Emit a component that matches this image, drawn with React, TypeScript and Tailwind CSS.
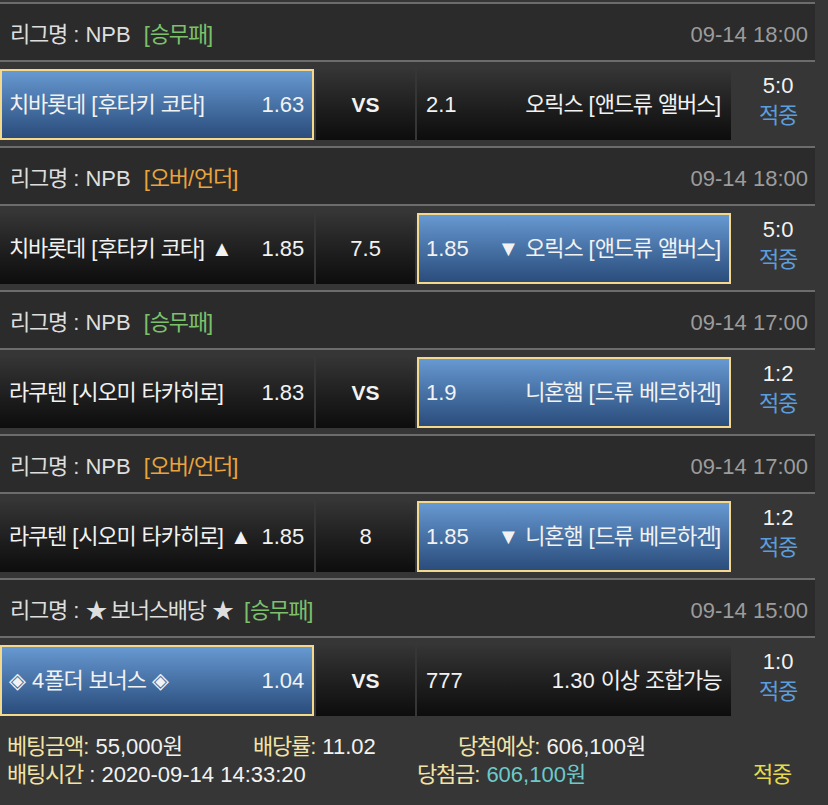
import React from "react";

const SPLIT = /([\uAC00-\uD7A3]+|★)/;

function T({ s }: { s: string }) {
  const parts = s.split(SPLIT);
  return (
    <>
      {parts.map((p, i) =>
        i % 2 === 1 ? (
          <span key={i} className={p === "★" ? "tracking-[-3px]" : "tracking-[-1.2px]"}>
            {p}
          </span>
        ) : (
          <React.Fragment key={i}>{p}</React.Fragment>
        )
      )}
    </>
  );
}

type Group = {
  league: string;
  tag: string;
  tagColor: "green" | "orange";
  date: string;
  home: string;
  homeOdds: string;
  mid: string;
  midBold: boolean;
  away: string;
  awayOdds: string;
  sel: "home" | "away";
  score: string;
};

const groups: Group[] = [
  {
    league: "리그명 : NPB",
    tag: "[승무패]",
    tagColor: "green",
    date: "09-14 18:00",
    home: "치바롯데 [후타키 코타]",
    homeOdds: "1.63",
    mid: "VS",
    midBold: true,
    away: "오릭스 [앤드류 앨버스]",
    awayOdds: "2.1",
    sel: "home",
    score: "5:0",
  },
  {
    league: "리그명 : NPB",
    tag: "[오버/언더]",
    tagColor: "orange",
    date: "09-14 18:00",
    home: "치바롯데 [후타키 코타] ▲",
    homeOdds: "1.85",
    mid: "7.5",
    midBold: false,
    away: "▼ 오릭스 [앤드류 앨버스]",
    awayOdds: "1.85",
    sel: "away",
    score: "5:0",
  },
  {
    league: "리그명 : NPB",
    tag: "[승무패]",
    tagColor: "green",
    date: "09-14 17:00",
    home: "라쿠텐 [시오미 타카히로]",
    homeOdds: "1.83",
    mid: "VS",
    midBold: true,
    away: "니혼햄 [드류 베르하겐]",
    awayOdds: "1.9",
    sel: "away",
    score: "1:2",
  },
  {
    league: "리그명 : NPB",
    tag: "[오버/언더]",
    tagColor: "orange",
    date: "09-14 17:00",
    home: "라쿠텐 [시오미 타카히로] ▲",
    homeOdds: "1.85",
    mid: "8",
    midBold: false,
    away: "▼ 니혼햄 [드류 베르하겐]",
    awayOdds: "1.85",
    sel: "away",
    score: "1:2",
  },
  {
    league: "리그명 : ★ 보너스배당 ★",
    tag: "[승무패]",
    tagColor: "green",
    date: "09-14 15:00",
    home: "◈ 4폴더 보너스 ◈",
    homeOdds: "1.04",
    mid: "VS",
    midBold: true,
    away: "1.30 이상 조합가능",
    awayOdds: "777",
    sel: "home",
    score: "1:0",
  },
];

function cellCls(selected: boolean) {
  return selected
    ? "border-2 border-[#f4d98c] bg-linear-to-b from-[#6799d2] to-[#2a4d7c]"
    : "border-2 border-transparent bg-origin-border bg-linear-to-b from-[#353535] to-[#0d0d0d]";
}

function GroupView({ g }: { g: Group }) {
  return (
    <div>
      <div className="h-[2px] bg-[#6c6c6c]" />
      <div className="h-[56px] bg-[#2b2b2b] flex items-center justify-between pl-[10px] pr-[7px] pt-[5px] leading-[28px]">
        <div className="flex items-center text-[#dedede]">
          <span>
            <T s={g.league} />
          </span>
          <span
            className={
              g.tagColor === "green"
                ? "ml-[13px] text-[#7cc06b]"
                : "ml-[13px] text-[#eaa43c]"
            }
          >
            <T s={g.tag} />
          </span>
        </div>
        <div className="text-[#9c9c9c]">{g.date}</div>
      </div>
      <div className="h-[2px] bg-[#6c6c6c]" />
      <div className="flex gap-[2px] pt-[7px] pb-[6px]">
        <div
          className={`w-[315px] h-[71px] flex items-center justify-between pl-[7px] pr-[8px] text-[#f2f2f2] ${cellCls(
            g.sel === "home"
          )}`}
        >
          <span>
            <T s={g.home} />
          </span>
          <span>{g.homeOdds}</span>
        </div>
        <div
          className={`w-[99px] h-[71px] flex items-center justify-center text-[#f2f2f2] ${cellCls(
            false
          )}`}
        >
          <span className={g.midBold ? "font-bold text-[21px]" : ""}>{g.mid}</span>
        </div>
        <div
          className={`w-[315px] h-[71px] flex items-center justify-between pl-[7px] pr-[8px] text-[#f2f2f2] ${cellCls(
            g.sel === "away"
          )}`}
        >
          <span>{g.awayOdds}</span>
          <span>
            <T s={g.away} />
          </span>
        </div>
        <div className="w-[82px] h-[71px] flex flex-col items-center justify-center pl-[8px] pb-[8px] leading-[30px]">
          <span className="text-[#f2f2f2]">{g.score}</span>
          <span className="text-[#5c9ddb]">
            <T s="적중" />
          </span>
        </div>
      </div>
    </div>
  );
}

export default function App() {
  return (
    <div className="w-[828px] h-[805px] bg-[#363636] pt-[2px] overflow-hidden font-['Liberation_Sans','Noto_Sans_CJK_KR',sans-serif] text-[22px] leading-[28px]">
      <div className="w-[815px]">
        {groups.map((g, i) => (
          <GroupView key={i} g={g} />
        ))}
        <div className="pt-[11px]">
          <div className="flex h-[28px] items-center">
            <div className="w-[253px] pl-[7px]">
              <span className="text-[#f2e3a6]">
                <T s="베팅금액:" />
              </span>
              <span className="text-[#f2f2f2]">
                {" "}
                55,000<T s="원" />
              </span>
            </div>
            <div className="w-[205px]">
              <span className="text-[#f2e3a6]">
                <T s="배당률:" />
              </span>
              <span className="text-[#f2f2f2]"> 11.02</span>
            </div>
            <div>
              <span className="text-[#f2e3a6]">
                <T s="당첨예상:" />
              </span>
              <span className="text-[#f2f2f2]">
                {" "}
                606,100<T s="원" />
              </span>
            </div>
          </div>
          <div className="flex h-[28px] items-center">
            <div className="w-[417px] pl-[7px]">
              <span className="text-[#f2e3a6]">
                <T s="배팅시간" />
              </span>
              <span className="text-[#f2f2f2]"> : 2020-09-14 14:33:20</span>
            </div>
            <div className="w-[336px]">
              <span className="text-[#f2e3a6]">
                <T s="당첨금:" />
              </span>
              <span className="text-[#6ccaca]">
                {" "}
                606,100<T s="원" />
              </span>
            </div>
            <div className="text-[#e8d94c]">
              <T s="적중" />
            </div>
          </div>
        </div>
      </div>
    </div>
  );
}
